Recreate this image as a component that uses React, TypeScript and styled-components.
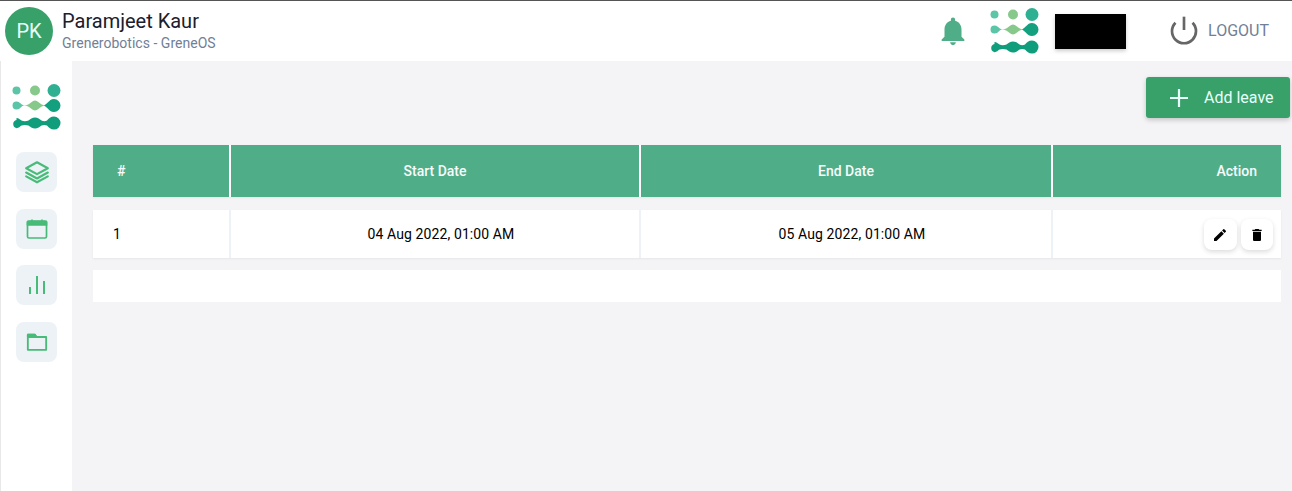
import styled, { createGlobalStyle } from "styled-components";

const GlobalStyle = createGlobalStyle`
  html, body {
    margin: 0;
    padding: 0;
    height: 100%;
    background: #fff;
    font-family: Roboto, "Liberation Sans", sans-serif;
  }
  #root { height: 100%; }
`;

const Page = styled.div`
  height: 491px;
  overflow: hidden;
  display: flex;
  flex-direction: column;
  border-top: 1px solid #555;
  box-sizing: border-box;
`;

const Header = styled.header`
  height: 60px;
  flex: none;
  display: flex;
  align-items: center;
  padding: 0 23px 0 5px;
  background: #fff;
`;

const Avatar = styled.div`
  width: 48px;
  height: 48px;
  border-radius: 50%;
  background: #38a169;
  color: #e6fffa;
  font-size: 20px;
  display: flex;
  align-items: center;
  justify-content: center;
`;

const UserInfo = styled.div`
  margin-left: 9px;
  flex: 1;
  padding-bottom: 2px;
`;

const UserName = styled.div`
  font-size: 20px;
  line-height: 24px;
  color: #1a202c;
`;

const UserOrg = styled.div`
  font-size: 14px;
  line-height: 18px;
  color: #718096;
  margin-top: 1px;
  letter-spacing: 0.02px;
`;

const BellWrap = styled.div`
  width: 34px;
  height: 34px;
  margin-right: 20px;
  color: #4fae88;
  svg { display: block; }
`;

const MaskBox = styled.div`
  width: 71px;
  height: 35px;
  margin-left: 15px;
  background: #000;
  box-shadow: 0 2px 4px rgba(0, 0, 0, 0.2);
`;

const Logout = styled.div`
  display: flex;
  align-items: center;
  margin-left: 42px;
  margin-bottom: 2px;
  color: #718096;
  font-size: 16px;
  gap: 8px;
  svg { display: block; }
`;

const Body = styled.div`
  flex: 1;
  display: flex;
  min-height: 0;
`;

const Sidebar = styled.nav`
  width: 72px;
  flex: none;
  background: #fff;
  border-left: 1px solid #e8e8e8;
  display: flex;
  flex-direction: column;
  align-items: center;
  padding-top: 23px;
  box-sizing: border-box;
`;

const SideLogo = styled.div`
  height: 47px;
  margin-bottom: 21px;
  svg { display: block; }
`;

const SideTile = styled.div`
  width: 41px;
  height: 40px;
  border-radius: 8px;
  background: #edf2f7;
  margin-bottom: 16.5px;
  display: flex;
  align-items: center;
  justify-content: center;
  color: #48bb78;
`;

const Main = styled.main`
  flex: 1;
  background: #f4f4f7;
  padding: 16px 2px 0 21px;
  min-width: 0;
`;

const TopActions = styled.div`
  display: flex;
  justify-content: flex-end;
  margin-bottom: 27px;
`;

const AddButton = styled.button`
  width: 144px;
  height: 41px;
  border: 0;
  border-radius: 3px;
  background: #38a169;
  color: #e6fffa;
  font: 400 16px Roboto, "Liberation Sans", sans-serif;
  display: flex;
  align-items: center;
  padding: 0 0 0 20px;
  gap: 12px;
  box-shadow: 0 2px 5px rgba(0, 0, 0, 0.2);
  svg { display: block; }
`;

const Table = styled.div`
  width: 1188px;
`;

const Row = styled.div<{ $head?: boolean; $height: number }>`
  display: grid;
  grid-template-columns: 136px 408px 410px 228px;
  column-gap: 2px;
  height: ${(p) => p.$height}px;
  margin-bottom: ${(p) => (p.$head ? 13 : 12)}px;
  background: ${(p) => (p.$head ? "#fff" : "#edf2f7")};
  color: ${(p) => (p.$head ? "#f7fafc" : "#000")};
  font-size: 14px;
  font-weight: ${(p) => (p.$head ? 500 : 400)};
  box-shadow: 0 1px 2px rgba(0, 0, 0, 0.06);
`;

const HeadCell = styled.div<{ $align?: string }>`
  display: flex;
  align-items: center;
  justify-content: ${(p) => p.$align || "center"};
  background: #4fae88;
  padding: 0 24px;
`;

const DataCell = styled.div<{ $align?: string }>`
  display: flex;
  align-items: center;
  justify-content: ${(p) => p.$align || "center"};
  background: #fff;
  padding: ${(p) => (p.$align ? "0 8px 0 20px" : "0 0 0 12px")};
  gap: 4px;
  letter-spacing: 0.1px;
`;

const EmptyRow = styled.div`
  height: 32px;
  background: #fff;
`;

const IconButton = styled.button`
  width: 32.5px;
  height: 31px;
  margin-top: 1px;
  border: 0;
  border-radius: 8px;
  background: #fff;
  padding: 0;
  display: flex;
  align-items: center;
  justify-content: center;
  box-shadow: 0 2px 5px rgba(0, 0, 0, 0.14);
  svg { display: block; }
`;

const Logo = () => (
  <svg width="50" height="46" viewBox="0 0 50 46">
    <circle cx="4.500" cy="6.500" r="4" fill="#5cc5a7" />
    <circle cx="23" cy="6.500" r="5" fill="#86c98a" />
    <circle cx="42" cy="6.500" r="6.500" fill="#2fb092" />
    <path d="M4.500 17.500c2.500 0 3.500 1.500 5 2.800 1.200 1 2.500 1.200 3.500 1.200-1 0-2.300.2-3.500 1.200-1.500 1.300-2.500 2.800-5 2.800a4 4 0 0 1 0-8z" fill="#5cc5a7" />
    <path d="M11.500 21.500c4 0 6-1.500 7.500-3 1.500-1.300 2.800-2 4-2s2.500.7 4 2c1.500 1.500 3.500 3 7.500 3-4 0-6 1.500-7.500 3-1.500 1.300-2.800 2-4 2s-2.500-.7-4-2c-1.500-1.500-3.500-3-7.500-3z" fill="#86c98a" />
    <path d="M42 15a6.500 6.500 0 0 1 0 13c-3 0-4.500-1.800-6-3.300-1.300-1.300-2.500-2.400-4-3.200 1.500-.8 2.700-1.900 4-3.200 1.500-1.500 3-3.300 6-3.300z" fill="#12a07f" />
    <path d="M4.500 34c2.300 0 3.500 1.600 5 2.600 1.800.8 4.800.8 7 0 1.700-1.500 3.800-3 6.500-3s4.800 1.500 6.500 3c1.800.8 3.800.8 5.500 0 1.700-2 3.700-4 7-4a6.500 6.500 0 0 1 0 13c-3.300 0-5.300-2-7-4-1.700-.8-3.700-.8-5.500 0-1.700 1.500-3.800 3-6.500 3s-4.800-1.500-6.500-3c-2.200-.8-5.200-.8-7 0-1.500 1-2.700 2.600-5 2.600a4.200 4.200 0 0 1 0-8.200z" fill="#0f9d7c" />
  </svg>
);

const Plus = () => (
  <svg width="26" height="26" viewBox="0 0 26 26" stroke="#e6fffa" strokeWidth="2.200" fill="none">
    <path d="M13 4v18M4 13h18" />
  </svg>
);

const strokeIcon = {
  fill: "none",
  stroke: "currentColor",
  strokeWidth: 2,
  strokeLinejoin: "round" as const,
  strokeLinecap: "round" as const,
};

export default function App() {
  return (
    <>
      <GlobalStyle />
      <Page>
        <Header>
          <Avatar>PK</Avatar>
          <UserInfo>
            <UserName>Paramjeet Kaur</UserName>
            <UserOrg>Grenerobotics - GreneOS</UserOrg>
          </UserInfo>
          <BellWrap>
            <svg width="34" height="34" viewBox="0 0 24 24" fill="currentColor">
              <path d="M12 22c1.100 0 2-.9 2-2h-4c0 1.100.89 2 2 2zm6-6v-5c0-3.070-1.640-5.640-4.500-6.320V4c0-.83-.67-1.500-1.500-1.500s-1.500.67-1.500 1.500v.68C7.630 5.360 6 7.920 6 11v5l-2 2v1h16v-1l-2-2z" />
            </svg>
          </BellWrap>
          <Logo />
          <MaskBox />
          <Logout>
            <svg width="32" height="32" viewBox="0 0 24 24" fill="none" stroke="#666" strokeWidth="2">
              <path d="M12 2v10" />
              <path d="M18.400 6.600a9 9 0 1 1-12.790 0" />
            </svg>
            LOGOUT
          </Logout>
        </Header>
        <Body>
          <Sidebar>
            <SideLogo>
              <Logo />
            </SideLogo>
            <SideTile>
              <svg width="26" height="26" viewBox="0 0 24 24" {...strokeIcon}>
                <path d="M12 3l10 5.500-10 5.500L2 8.500z" />
                <path d="M2 12.500l10 5.500 10-5.500" />
                <path d="M2 16l10 5.500L22 16" />
              </svg>
            </SideTile>
            <SideTile>
              <svg width="22" height="22" viewBox="0 0 22 22" fill="none" stroke="currentColor" strokeWidth="1.700" strokeLinejoin="round">
                <rect x="1.500" y="3" width="19" height="17" rx="1.500" />
                <path d="M1.500 3.500h19V7h-19z" fill="currentColor" />
                <path d="M6 1.500v2M16 1.500v2" />
              </svg>
            </SideTile>
            <SideTile>
              <svg width="24" height="24" viewBox="0 0 24 24" fill="none" stroke="currentColor" strokeWidth="2">
                <path d="M5 21v-7M12 21V3M19 21V8" />
              </svg>
            </SideTile>
            <SideTile>
              <svg width="22" height="22" viewBox="0 0 24 24" fill="none" stroke="currentColor" strokeWidth="2" strokeLinejoin="round">
                <path d="M2 4h7.500l2 2.500H22v14H2z" />
                <path d="M2 4h7.500l2 2.500H2z" fill="currentColor" />
              </svg>
            </SideTile>
          </Sidebar>
          <Main>
            <TopActions>
              <AddButton>
                <Plus />
                Add leave
              </AddButton>
            </TopActions>
            <Table>
              <Row $head $height={52}>
                <HeadCell $align="flex-start">#</HeadCell>
                <HeadCell>Start Date</HeadCell>
                <HeadCell>End Date</HeadCell>
                <HeadCell $align="flex-end">Action</HeadCell>
              </Row>
              <Row $height={48}>
                <DataCell $align="flex-start">1</DataCell>
                <DataCell>04 Aug 2022, 01:00 AM</DataCell>
                <DataCell>05 Aug 2022, 01:00 AM</DataCell>
                <DataCell $align="flex-end">
                  <IconButton aria-label="Edit">
                    <svg width="16" height="16" viewBox="0 0 24 24" fill="#000">
                      <path d="M3 17.250V21h3.750L17.810 9.940l-3.750-3.750L3 17.250zM20.710 7.040a1 1 0 0 0 0-1.410l-2.340-2.340a1 1 0 0 0-1.410 0l-1.830 1.830 3.750 3.750 1.830-1.830z" />
                    </svg>
                  </IconButton>
                  <IconButton aria-label="Delete">
                    <svg width="16" height="16" viewBox="0 0 24 24" fill="#000">
                      <path d="M6 19c0 1.100.9 2 2 2h8c1.100 0 2-.9 2-2V7H6v12zM19 4h-3.500l-1-1h-5l-1 1H5v2h14V4z" />
                    </svg>
                  </IconButton>
                </DataCell>
              </Row>
              <EmptyRow />
            </Table>
          </Main>
        </Body>
      </Page>
    </>
  );
}
